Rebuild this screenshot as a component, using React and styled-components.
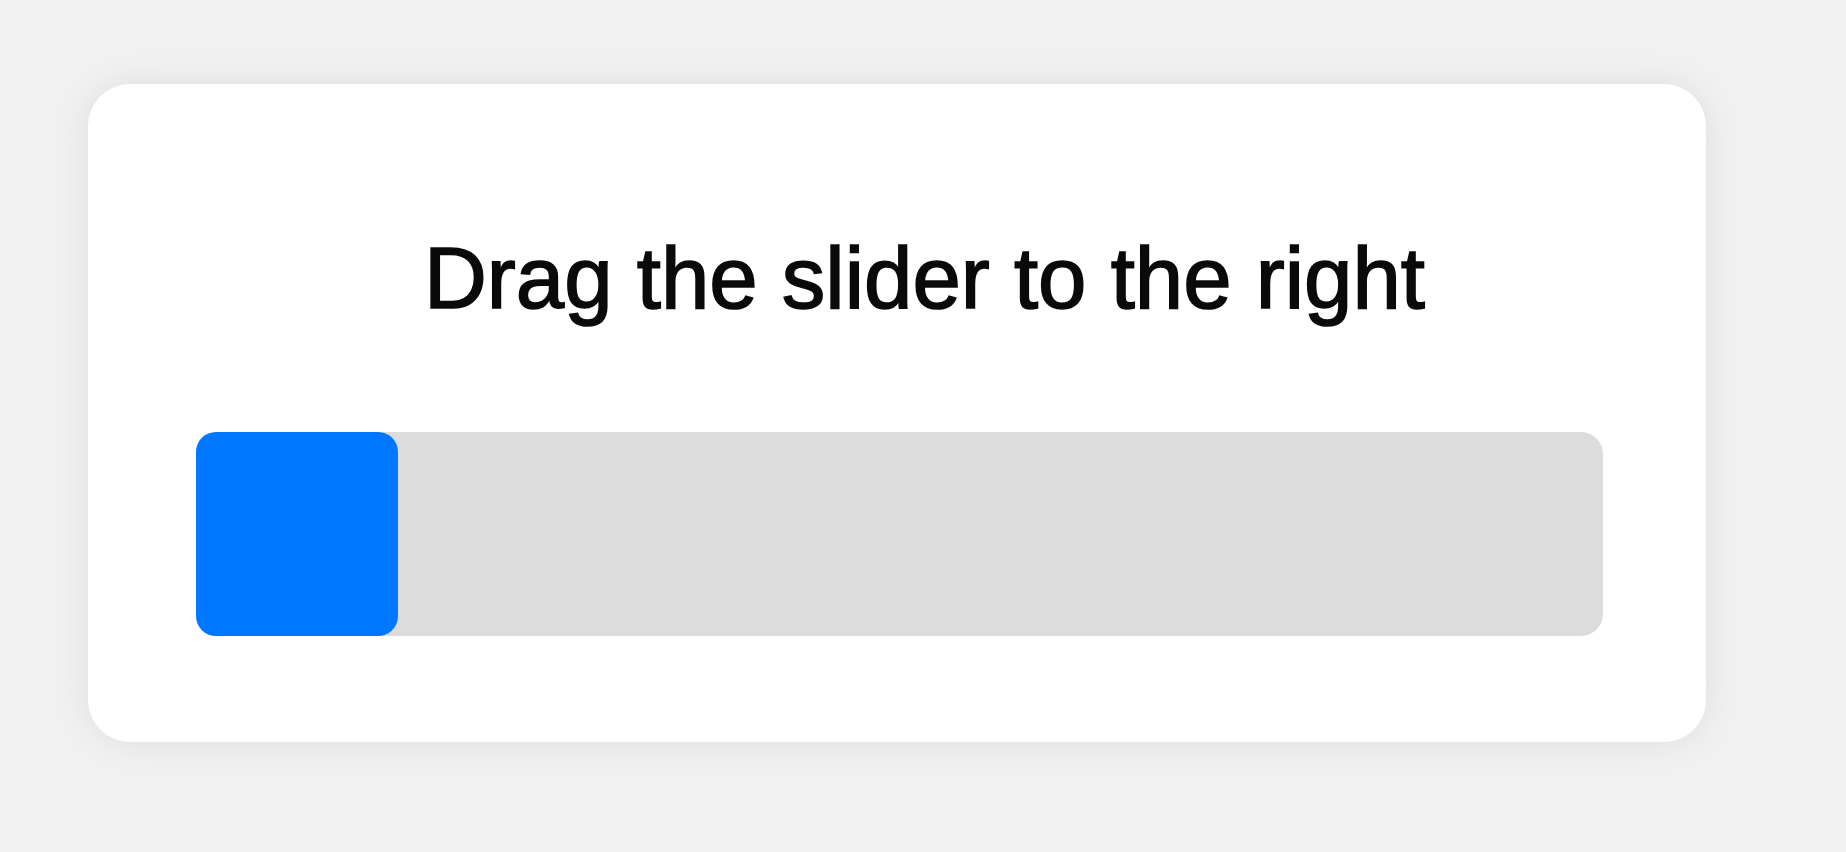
import React from 'react'
import styled, { createGlobalStyle } from 'styled-components'

const GlobalStyle = createGlobalStyle`
  html, body {
    margin: 0;
    padding: 0;
    background: #f1f1f1;
    font-family: "Liberation Sans", Arial, sans-serif;
  }
`

function App() {
    return (
        <>
            <GlobalStyle />
            <Page>
                <Card>
                    <Title>Drag the slider to the right</Title>
                    <Track>
                        <Thumb />
                    </Track>
                </Card>
            </Page>
        </>
    )
}

export default App

const Page = styled.div`
    min-height: 852px;
    padding: 84px 0 0 88px;
    box-sizing: border-box;
`

const Card = styled.div`
    width: 1618px;
    height: 658px;
    box-sizing: border-box;
    padding: 150px 103px 106px 108px;
    background: #ffffff;
    border-radius: 42px;
    box-shadow: 0 0 36px rgba(0, 0, 0, 0.08);
    display: flex;
    flex-direction: column;
`

const Title = styled.div`
    font-size: 87px;
    line-height: 1;
    height: 87px;
    color: #0a0a0a;
    text-align: center;
    padding-left: 50px;
    margin-bottom: 111px;
    white-space: nowrap;
    -webkit-text-stroke: 1.6px #0a0a0a;
`

const Track = styled.div`
    height: 204px;
    background: #dcdcdc;
    border-radius: 22px;
    display: flex;
`

const Thumb = styled.div`
    width: 202px;
    height: 204px;
    background: #0077ff;
    border-radius: 20px;
    cursor: grab;
`
